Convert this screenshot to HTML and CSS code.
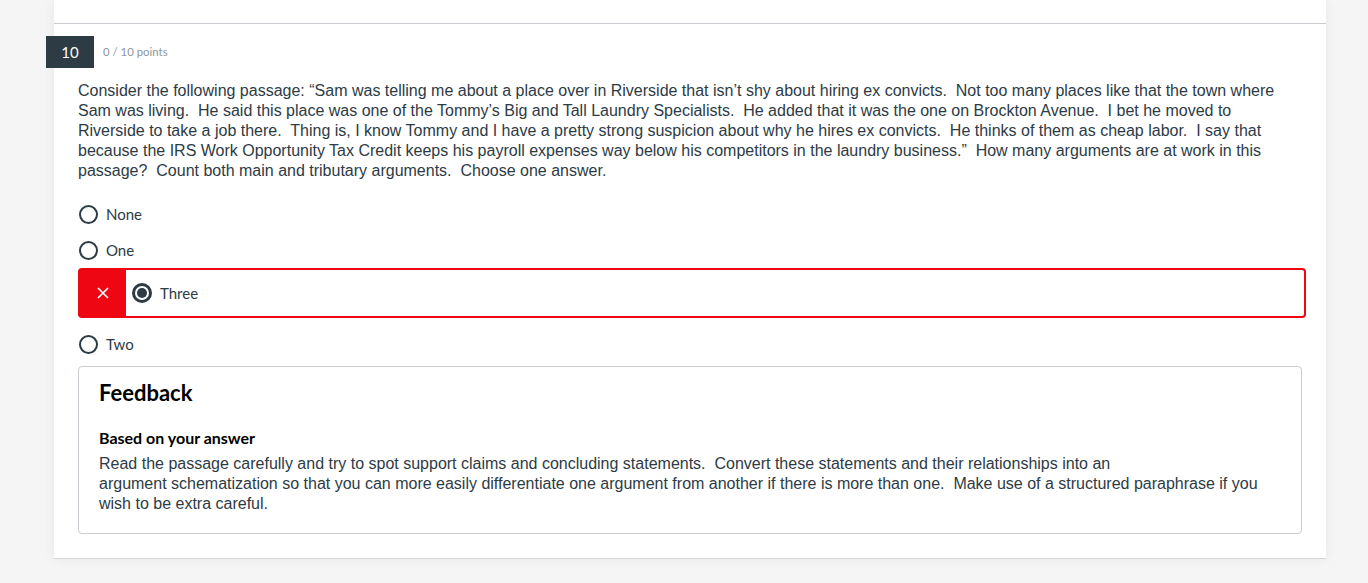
FILE: index.html
```html
<!DOCTYPE html>
<html>
<head>
<meta charset="utf-8">
<link rel="stylesheet" href="styles.css">
</head>
<body>
<div class="page">
  <div class="top"></div>
  <div class="question">
    <div class="q-header">
      <div class="qnum">10</div>
      <div class="pts">0 / 10 points</div>
    </div>
    <div class="q-text">Consider the following passage: “Sam was telling me about a place over in Riverside that isn’t shy about hiring ex convicts.&nbsp; Not too many places like that the town where Sam was living.&nbsp; He said this place was one of the Tommy’s Big and Tall Laundry Specialists.&nbsp; He added that it was the one on Brockton Avenue.&nbsp; I bet he moved to Riverside to take a job there.&nbsp; Thing is, I know Tommy and I have a pretty strong suspicion about why he hires ex convicts.&nbsp; He thinks of them as cheap labor.&nbsp; I say that because the IRS Work Opportunity Tax Credit keeps his payroll expenses way below his competitors in the laundry business.”&nbsp; How many arguments are at work in this passage?&nbsp; Count both main and tributary arguments.&nbsp; Choose one answer.</div>
    <div class="answers">
      <div class="answer"><span class="radio"></span><span class="label">None</span></div>
      <div class="answer"><span class="radio"></span><span class="label">One</span></div>
      <div class="answer wrong">
        <div class="mark"><svg width="12" height="12" viewBox="0 0 12 12"><path d="M1 1L11 11M11 1L1 11" stroke="#fff" stroke-width="1.6"/></svg></div>
        <svg class="radio-on" width="20" height="20" viewBox="0 0 20 20"><circle cx="10" cy="10" r="10" fill="#2d3b45"/><circle cx="10" cy="10" r="7" fill="#fff"/><circle cx="10" cy="10" r="5" fill="#2d3b45"/></svg>
        <span class="label">Three</span>
      </div>
      <div class="answer"><span class="radio"></span><span class="label">Two</span></div>
    </div>
    <div class="feedback">
      <h2 class="fb-title">Feedback</h2>
      <h3 class="fb-sub">Based on your answer</h3>
      <p class="fb-text">Read the passage carefully and try to spot support claims and concluding statements.&nbsp; Convert these statements and their relationships into an<br>argument schematization so that you can more easily differentiate one argument from another if there is more than one.&nbsp; Make use of a structured paraphrase if you wish to be extra careful.</p>
    </div>
  </div>
</div>
</body>
</html>
```

FILE: styles.css
```css
html, body {
  margin: 0;
  padding: 0;
  background: #f5f5f5;
  height: 583px;
  overflow: hidden;
}
.page {
  width: 1272px;
  margin-left: 54px;
  box-shadow: 0 0 12px rgba(0,0,0,0.06);
}
.top {
  height: 23px;
  background: #fff;
  border-bottom: 1px solid #c7cdd1;
}
.question {
  background: #fff;
  padding: 12px 24px 24px 24px;
  border-bottom: 1px solid #d4d8db;
}
.q-header {
  display: flex;
  align-items: center;
  margin-left: -32px;
}
.qnum {
  width: 48px;
  height: 32px;
  background: #2d3b45;
  color: #fff;
  font-family: Lato, sans-serif;
  font-size: 15px;
  display: flex;
  align-items: center;
  justify-content: center;
}
.pts {
  margin-left: 9px;
  margin-top: -2px;
  font-family: Lato, sans-serif;
  font-size: 11.4px;
  color: #8b969e;
}
.q-text {
  margin-top: 13px;
  font-family: "Liberation Sans", Arial, sans-serif;
  font-size: 16px;
  line-height: 20px;
  color: #2d3b45;
}
.answers {
  margin-top: 15px;
}
.answer {
  display: flex;
  align-items: center;
  height: 36px;
  font-family: Lato, sans-serif;
  font-size: 15px;
  color: #2d3b45;
}
.radio {
  width: 15px;
  height: 15px;
  border: 2px solid #2d3b45;
  border-radius: 50%;
  margin-left: 1px;
  margin-right: 8px;
  flex: none;
}
.answer.wrong {
  height: 46px;
  border: 2px solid #ee0612;
  border-radius: 4px;
  margin-right: -4px;
  margin-bottom: 8px;
}
.mark {
  width: 46px;
  height: 46px;
  background: #ee0612;
  display: flex;
  align-items: center;
  justify-content: center;
  margin-right: 6px;
  margin-left: -2px;
  padding-left: 2px;
  border-radius: 2px 0 0 2px;
}
.radio-on {
  flex: none;
  margin-right: 8px;
}
.feedback {
  margin-top: 4px;
  border: 1px solid #c7cdd1;
  border-radius: 4px;
  padding: 13px 20px 19px 20px;
}
.fb-title {
  margin: 0;
  font-family: Lato, sans-serif;
  font-size: 22px;
  font-weight: 700;
  line-height: 26px;
  color: #000;
}
.fb-sub {
  margin: 22px 0 0 0;
  font-family: Lato, sans-serif;
  font-size: 16px;
  font-weight: 700;
  line-height: 20px;
  color: #000;
}
.fb-text {
  margin: 6px 0 0 0;
  font-family: "Liberation Sans", Arial, sans-serif;
  font-size: 16px;
  line-height: 20px;
  color: #2d3b45;
}
```
